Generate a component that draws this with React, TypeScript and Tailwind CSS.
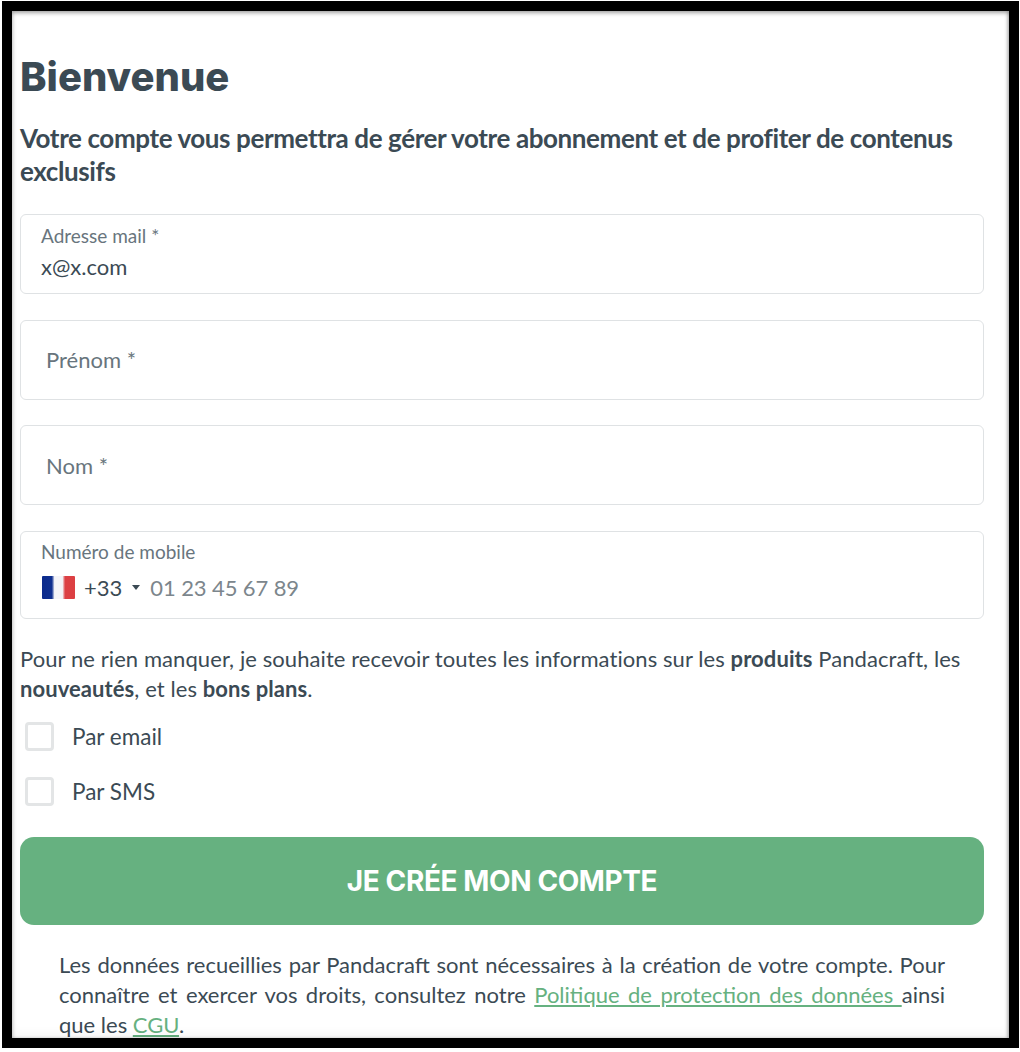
export default function App() {
  return (
    <div className="w-[1020px] h-[1052px] bg-white pt-px pl-[2px] pr-px pb-1 text-[#3b4a54] [font-family:Lato,sans-serif]">
      <div className="h-[1047px] border-[10px] border-black overflow-hidden relative">
        <div className="absolute inset-0 pointer-events-none shadow-[inset_0_2px_4px_rgba(0,0,0,0.35),inset_-2px_0_3px_rgba(0,0,0,0.12),inset_0_-6px_8px_rgba(0,0,0,0.03)]" />
        <div className="pl-2 pr-[25px] pt-[42px]">
          <h1 className="text-[40px] leading-[48px] font-extrabold text-[#3b4a54] [font-family:Inter,sans-serif]">Bienvenue</h1>
          <p className="mt-[21px] text-[26px] leading-[33px] font-bold tracking-[-0.4px] text-[#3b4a54]">
            Votre compte vous permettra de gérer votre abonnement et de profiter de contenus exclusifs
          </p>

          <div className="mt-[26px] h-[80px] border border-[#dfe2e4] rounded-md pl-[20px] pt-[11px]">
            <div className="text-[19px] leading-[20px] text-[#68757d]">Adresse mail *</div>
            <div className="mt-[9px] text-[22px] leading-[24px] text-[#3b4a54]">x@x.com</div>
          </div>

          <div className="mt-[26px] h-[80px] border border-[#dfe2e4] rounded-md pl-[25px] pb-[2px] flex items-center">
            <span className="text-[22px] text-[#68757d]">Prénom *</span>
          </div>

          <div className="mt-[25px] h-[80px] border border-[#dfe2e4] rounded-md pl-[25px] flex items-center">
            <span className="text-[22px] text-[#68757d]">Nom *</span>
          </div>

          <div className="mt-[26px] h-[88px] border border-[#dfe2e4] rounded-md pl-[20px] pt-[10px]">
            <div className="text-[19px] leading-[20px] text-[#68757d]">Numéro de mobile</div>
            <div className="mt-[12px] ml-px flex items-center h-[26px]">
              <svg width="33" height="23" viewBox="0 0 33 23" className="shrink-0">
                <defs>
                  <linearGradient id="fr" x1="0" x2="1" y1="0" y2="0">
                    <stop offset="0" stopColor="#0b2a8c" />
                    <stop offset="0.3" stopColor="#0f2f90" />
                    <stop offset="0.38" stopColor="#f4f4f8" />
                    <stop offset="0.62" stopColor="#f4f4f8" />
                    <stop offset="0.7" stopColor="#dc4044" />
                    <stop offset="1" stopColor="#dc3f42" />
                  </linearGradient>
                </defs>
                <rect width="33" height="23" rx="1" fill="url(#fr)" />
              </svg>
              <span className="ml-[9px] text-[22px] text-[#3b4a54]">+33</span>
              <svg width="8" height="5" viewBox="0 0 8 5" className="ml-[10px]"><path d="M0 0h8L4 5z" fill="#3b4a54" /></svg>
              <span className="ml-[10px] text-[22px] tracking-[-0.1px] text-[#7c868c]">01 23 45 67 89</span>
            </div>
          </div>

          <p className="mt-[25px] text-[22px] leading-[30px] tracking-[0.08px] text-[#3b4a54]">
            Pour ne rien manquer, je souhaite recevoir toutes les informations sur les <b>produits</b> Pandacraft, les <b>nouveautés</b>, et les <b>bons plans</b>.
          </p>

          <label className="mt-[5px] flex items-center h-[55px]">
            <span className="ml-[5px] w-[29px] h-[29px] border-[3px] border-[#e3e5e6] rounded-[4px] block" />
            <span className="ml-[18px] text-[22.5px] text-[#3b4a54]">Par email</span>
          </label>
          <label className="flex items-center h-[55px]">
            <span className="ml-[5px] w-[29px] h-[29px] border-[3px] border-[#e3e5e6] rounded-[4px] block" />
            <span className="ml-[18px] text-[22.5px] text-[#3b4a54]">Par SMS</span>
          </label>

          <button className="mt-[18px] w-full h-[88px] rounded-[14px] bg-[#66b180] text-white text-[28px] font-bold [font-family:Inter,sans-serif] tracking-[-0.4px] text-center">
            JE CRÉE MON COMPTE
          </button>

          <p className="mt-[25px] px-[39px] text-[22px] leading-[30px] text-[#3b4a54] text-justify">
            Les données recueillies par Pandacraft sont nécessaires à la création de votre compte. Pour connaître et exercer vos droits, consultez notre{' '}
            <a className="text-[#66b180] underline">Politique de protection des données </a>
            ainsi que les <a className="text-[#66b180] underline">CGU</a>.
          </p>
        </div>
      </div>
    </div>
  );
}
